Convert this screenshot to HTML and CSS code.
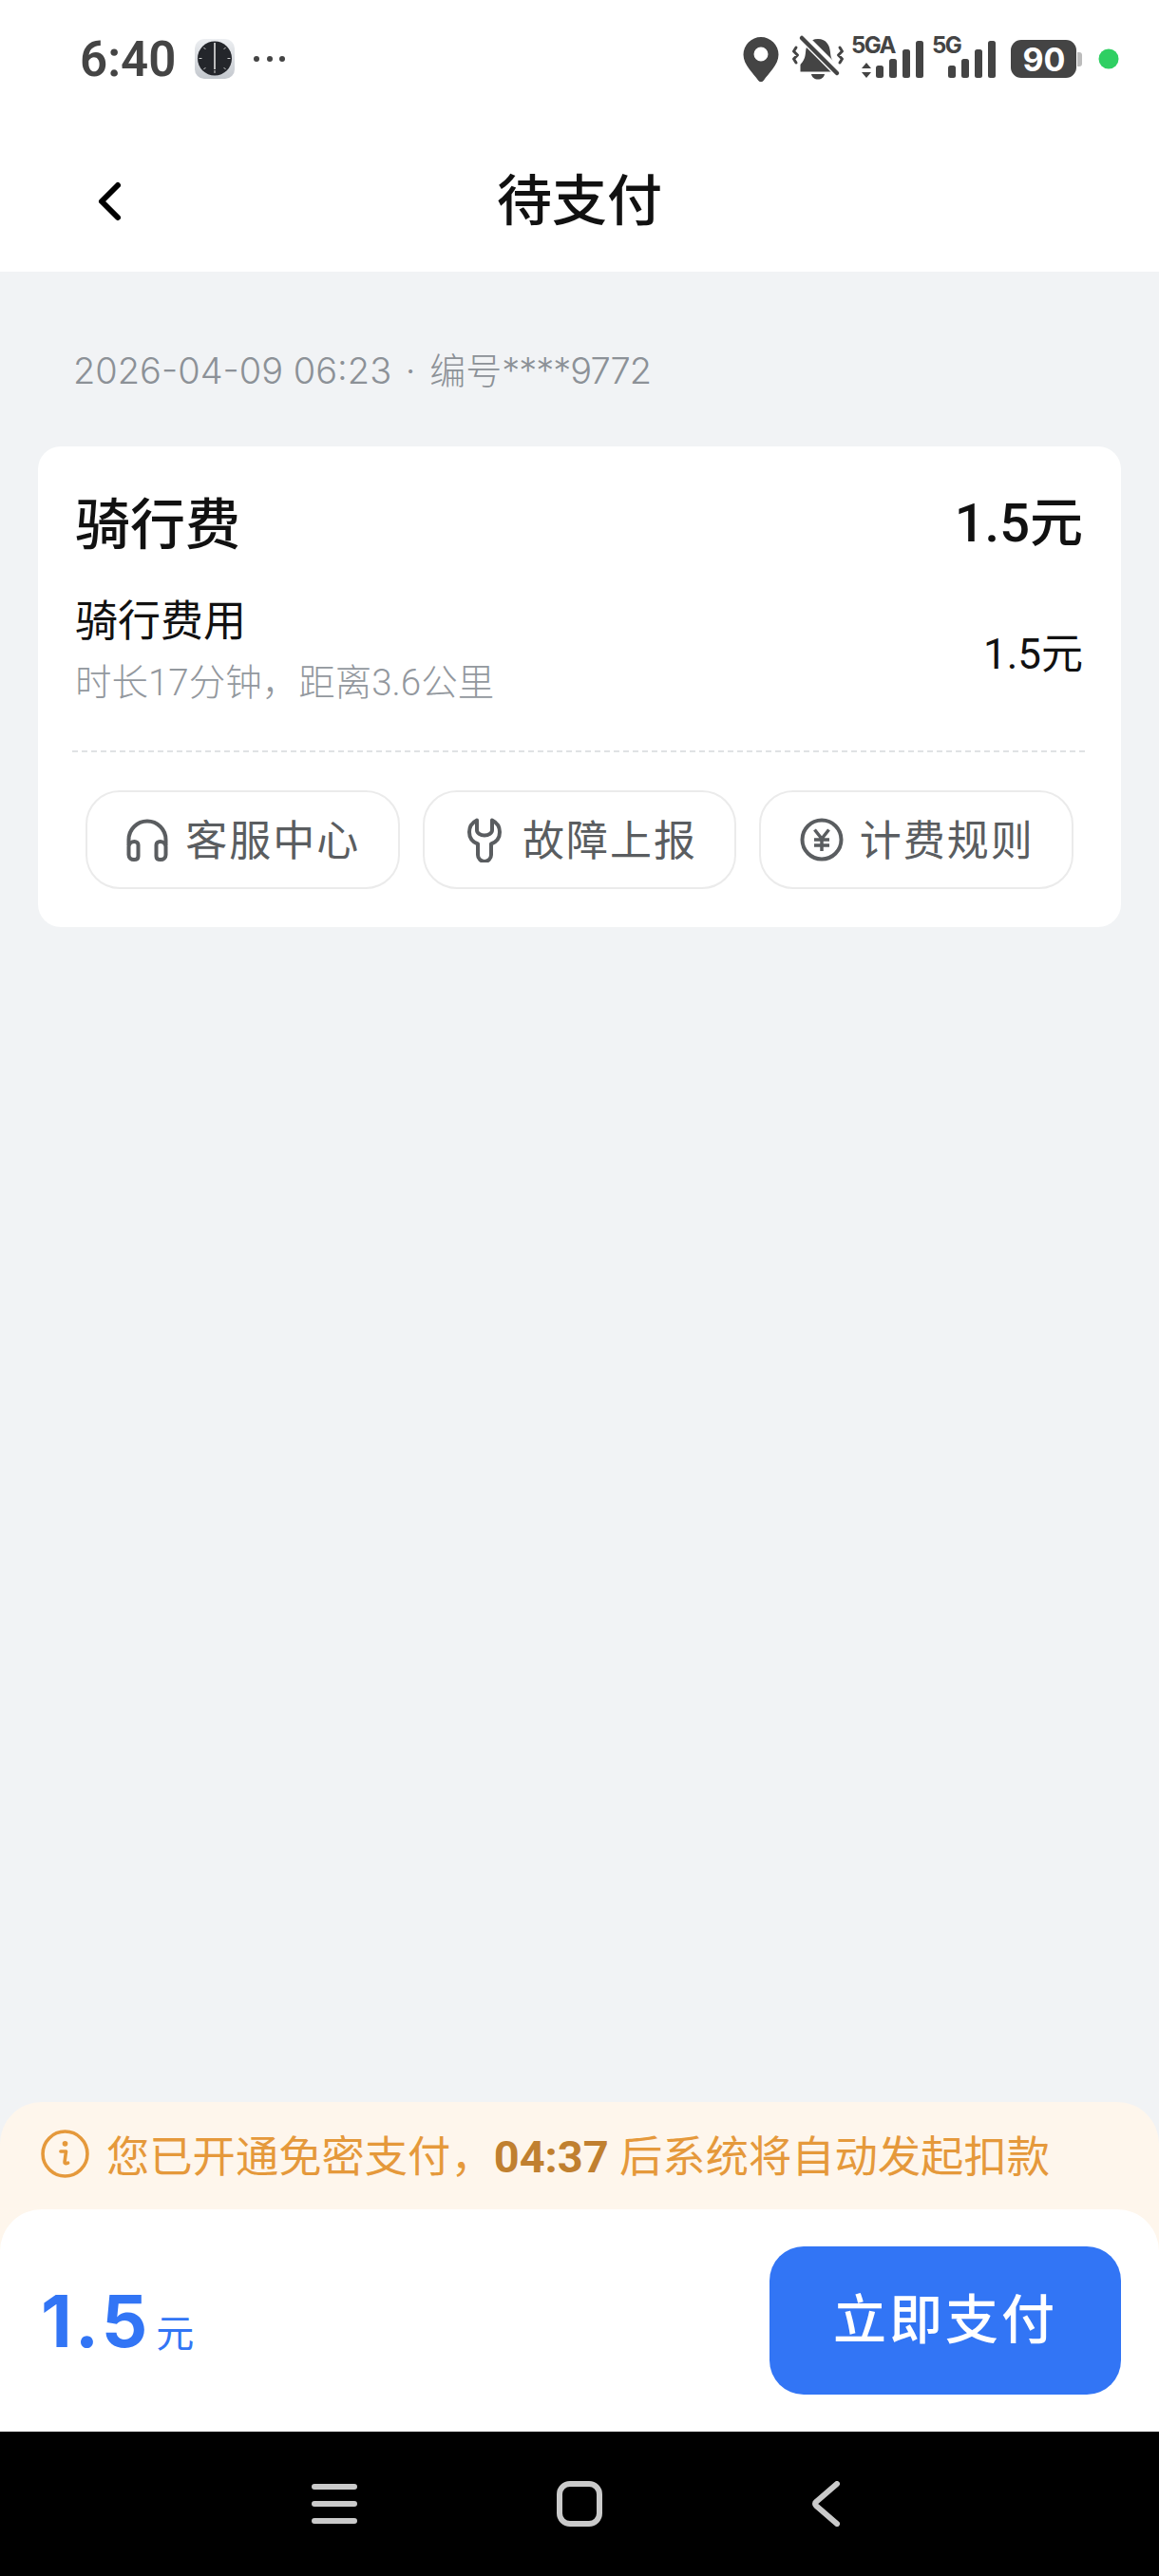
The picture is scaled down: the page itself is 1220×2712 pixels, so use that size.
FILE: index.html
```html
<!DOCTYPE html>
<html lang="zh-CN">

<head>
    <meta charset="UTF-8">
    <meta name="viewport" content="width=device-width, initial-scale=1.0">
    <title>待支付</title>
    <link rel="stylesheet" href="styles.css">
</head>

<body>
    <div class="page">
        <div class="status-bar">
            <div class="status-left">
                <span class="status-time">6:40</span>
                <svg class="clock-app" viewBox="0 0 42 42" width="42" height="42">
                    <defs>
                        <linearGradient id="clockBg" x1="0" y1="0" x2="0" y2="1">
                            <stop offset="0" stop-color="#eceef1"/>
                            <stop offset="1" stop-color="#c4c8ce"/>
                        </linearGradient>
                    </defs>
                    <rect width="42" height="42" rx="10" fill="url(#clockBg)"/>
                    <circle cx="21" cy="20.500" r="18" fill="#24262b"/>
                    <path d="M21 33v3M4.500 20.500h3M34.500 20.500h3M9.400 8.900l2 2M30.600 30.100l2 2M32.600 8.900l-2 2M11.400 30.100l-2 2" stroke="#ccc" stroke-width="1"/>
                    <path d="M21 4v28" stroke="#eee" stroke-width="1.500"/>
                </svg>
                <svg class="status-more" viewBox="0 0 34 8" width="34" height="8">
                    <circle cx="3" cy="4" r="3" fill="#444"/>
                    <circle cx="17" cy="4" r="3" fill="#444"/>
                    <circle cx="30" cy="4" r="3" fill="#444"/>
                </svg>
            </div>
            <svg class="status-icons" viewBox="780 32 400 60" width="400" height="60">
                <path fill-rule="evenodd" fill="#444" d="M801 39a18.500 18.500 0 0 1 18.500 18.500c0 11-11 20-15.500 27a3.500 3.500 0 0 1-6 0c-4.500-7-15.500-16-15.500-27A18.500 18.500 0 0 1 801 39zm0 10.500a7.500 7.500 0 1 0 0 15 7.500 7.500 0 0 0 0-15z"/>

                <path fill="#444" d="M861 41c9 0 12.500 7 13 14 .4 6 2 9 5.500 13v7.500h-37V68c3.500-4 5.100-7 5.500-13 .5-7 4-14 13-14z"/>
                <path fill="#444" d="M854 78h14c-.5 3.500-3.500 5.500-7 5.500s-6.500-2-7-5.500z"/>
                <path d="M844 38l38 38" stroke="#fff" stroke-width="10"/>
                <path d="M844 40l37 37" stroke="#444" stroke-width="4.500" stroke-linecap="round"/>
                <path d="M838 50l-2.500 4 4 4-4 4 2.500 4M884 50l2.500 4-4 4 4 4-2.500 4" fill="none" stroke="#444" stroke-width="3" stroke-linecap="round" stroke-linejoin="round"/>

                <text class="net-label" x="896" y="56">5GA</text>
                <path fill="#444" d="M912 66l5 6h-10zM912 82l-5-6h10z"/>
                <rect x="922" y="69" width="8" height="13" rx="2.500" fill="#444"/>
                <rect x="936" y="62" width="8" height="20" rx="2.500" fill="#444"/>
                <rect x="950" y="52" width="8" height="30" rx="2.500" fill="#444"/>
                <rect x="964" y="43" width="8" height="39" rx="2.500" fill="#444"/>

                <text class="net-label" x="981" y="56">5G</text>
                <rect x="998" y="69" width="8" height="13" rx="2.500" fill="#444"/>
                <rect x="1012" y="62" width="8" height="20" rx="2.500" fill="#444"/>
                <rect x="1026" y="52" width="8" height="30" rx="2.500" fill="#444"/>
                <rect x="1040" y="43" width="8" height="39" rx="2.500" fill="#444"/>

                <rect x="1064" y="42" width="69" height="40" rx="11" fill="#444"/>
                <path d="M1134 55h2a3 3 0 0 1 3 3v9a3 3 0 0 1-3 3h-2z" fill="#bcbcbc"/>
                <text class="battery-label" x="1099" y="74.500" text-anchor="middle">90</text>
                <circle cx="1167" cy="62" r="10.500" fill="#2fcf62"/>
            </svg>
        </div>

        <header class="nav-bar">
            <svg class="nav-back" viewBox="0 0 32 48" width="32" height="48">
                <path d="M24 7L7 24l17 17" fill="none" stroke="#000" stroke-width="6" stroke-linecap="round" stroke-linejoin="round"/>
            </svg>
            <h1 class="nav-title">待支付</h1>
        </header>

        <main class="content">
            <p class="order-meta">2026-04-09 06:23 <span class="meta-dot">·</span> 编号<span class="meta-no">****9772</span></p>

            <section class="card">
                <div class="fee-head">
                    <span class="fee-title">骑行费</span>
                    <span class="fee-total">1.5元</span>
                </div>
                <div class="fee-row">
                    <div>
                        <div class="fee-name">骑行费用</div>
                        <div class="fee-desc">时长17分钟，距离3.6公里</div>
                    </div>
                    <span class="fee-price">1.5元</span>
                </div>
                <div class="divider"></div>
                <div class="actions">
                    <button class="action">
                        <svg viewBox="0 0 48 48" width="48" height="48">
                            <path d="M4.500 30V24a19.500 19.500 0 0 1 39 0v6" fill="none" stroke="#5a5d60" stroke-width="4"/>
                            <path d="M4.500 31a6 6 0 0 1 6-5c2.500 0 4 1.500 4 3.500v12c0 2.200-1.500 3.500-4.500 3.500s-5.500-2-5.500-5z" fill="none" stroke="#5a5d60" stroke-width="4" stroke-linejoin="round"/>
                            <path d="M43.500 31a6 6 0 0 0-6-5c-2.500 0-4 1.500-4 3.500v12c0 2.200 1.500 3.500 4.500 3.500s5.500-2 5.500-5z" fill="none" stroke="#5a5d60" stroke-width="4" stroke-linejoin="round"/>
                        </svg>
                        <span>客服中心</span>
                    </button>
                    <button class="action">
                        <svg viewBox="0 0 48 48" width="48" height="48">
                            <path d="M16 3.500C11 6 8 11 8 16c0 6 3.500 10.500 9 12.500V40a7 7 0 0 0 14 0V28.500c5.500-2 9-6.500 9-12.500 0-5-3-10-8-12.500V14a8 5.500 0 0 1-16 0z" fill="none" stroke="#5a5d60" stroke-width="4" stroke-linejoin="round"/>
                        </svg>
                        <span>故障上报</span>
                    </button>
                    <button class="action">
                        <svg viewBox="0 0 48 48" width="48" height="48">
                            <circle cx="24" cy="24" r="20.500" fill="none" stroke="#5a5d60" stroke-width="4"/>
                            <path d="M16.500 13.500L24 23l7.500-9.500M16 24h16M16 30h16M24 23v13" fill="none" stroke="#5a5d60" stroke-width="3.500"/>
                        </svg>
                        <span>计费规则</span>
                    </button>
                </div>
            </section>
        </main>

        <div class="tip-wrap">
            <div class="tip">
                <svg viewBox="0 0 50 50" width="51" height="51">
                    <circle cx="25" cy="25" r="23" fill="none" stroke="#e5993b" stroke-width="3.500"/>
                    <circle cx="25" cy="14.500" r="2.800" fill="#e5993b"/>
                    <path d="M20.500 22.500h5.500l-1.500 11c-.2 1.500 1 2 3.500 1" fill="none" stroke="#e5993b" stroke-width="3.500" stroke-linecap="round" stroke-linejoin="round"/>
                </svg>
                <span class="tip-text">您已开通免密支付，<b class="tip-time">04:37</b> 后系统将自动发起扣款</span>
            </div>
            <div class="pay-bar">
                <div class="pay-amount"><span class="pay-num">1.5</span><span class="pay-unit">元</span></div>
                <button class="pay-btn"><span>立即支付</span></button>
            </div>
        </div>

        <div class="sys-nav">
            <svg viewBox="0 0 48 48" width="48" height="48">
                <path d="M3 6h42M3 24h42M3 42h42" stroke="#cacaca" stroke-width="6" stroke-linecap="round"/>
            </svg>
            <svg viewBox="0 0 48 48" width="48" height="48">
                <rect x="3" y="3" width="42" height="42" rx="11" fill="none" stroke="#cacaca" stroke-width="6"/>
            </svg>
            <svg viewBox="0 0 48 48" width="48" height="48">
                <path d="M37 3L15 22a2.500 2.500 0 0 0 0 4l22 19" fill="none" stroke="#cacaca" stroke-width="6" stroke-linecap="round" stroke-linejoin="round"/>
            </svg>
        </div>
    </div>
</body>

</html>
```

FILE: styles.css
```css
* {
    box-sizing: border-box;
}

html,
body {
    margin: 0;
    padding: 0;
}

body {
    font-family: Roboto, "Noto Sans CJK SC", sans-serif;
    background-color: #f1f3f5;
}

.page {
    width: 1220px;
    height: 2712px;
    display: flex;
    flex-direction: column;
    overflow: hidden;
}

/* status bar */
.status-bar {
    height: 124px;
    flex: none;
    background-color: #fff;
    display: flex;
    align-items: center;
    justify-content: space-between;
    padding: 0 40px 0 84px;
}

.status-left {
    display: flex;
    align-items: center;
}

.status-time {
    font-size: 51px;
    font-weight: 600;
    color: #444;
}

.clock-app {
    margin-left: 20px;
}

.status-more {
    margin-left: 20px;
}

.net-label {
    font-family: Inter, sans-serif;
    font-size: 24px;
    font-weight: 700;
    fill: #444;
    letter-spacing: -1.5px;
}

.battery-label {
    font-family: Inter, sans-serif;
    font-size: 34px;
    font-weight: 700;
    fill: #fff;
}

/* title bar */
.nav-bar {
    height: 162px;
    flex: none;
    background-color: #fff;
    display: grid;
    grid-template-columns: 1fr auto 1fr;
    align-items: center;
    padding: 14px 100px 0;
}

.nav-title {
    margin: 0;
    font-size: 58px;
    line-height: 70px;
    font-weight: 500;
    color: #111;
}

.content {
    flex: 1;
    padding: 79px 40px 0;
}

.order-meta {
    margin: 0 0 55px 37px;
    font-family: Inter, "Noto Sans CJK SC", sans-serif;
    font-size: 38px;
    line-height: 50px;
    font-weight: 300;
    color: #8c9197;
    white-space: nowrap;
}

.meta-dot {
    margin: 0 4px;
}

.meta-no {
    letter-spacing: -1px;
}

.card {
    background-color: #fff;
    border-radius: 24px;
    height: 506px;
    padding: 46px 40px 0;
}

.fee-head {
    display: flex;
    justify-content: space-between;
    align-items: center;
    height: 64px;
    margin-left: -1px;
}

.fee-title {
    font-size: 58px;
    font-weight: 500;
    color: #111;
}

.fee-total {
    font-size: 56px;
    font-weight: 500;
    color: #111;
    margin-top: -6px;
}

.fee-row {
    display: flex;
    justify-content: space-between;
    align-items: center;
    margin: 47px 0 0 -1px;
}

.fee-name {
    font-size: 45px;
    line-height: 56px;
    color: #111;
}

.fee-desc {
    margin-top: 8px;
    font-size: 38.500px;
    line-height: 56px;
    font-weight: 300;
    color: #93989e;
}

.fee-price {
    font-size: 44px;
    color: #111;
    margin-bottom: 4px;
}

.divider {
    margin: 43px -2px 0 -4px;
    border-top: 2px dashed #e0e2e4;
}

.actions {
    display: flex;
    gap: 24px;
    margin: 40px 10px 0;
}

.action {
    flex: 1;
    height: 104px;
    background-color: #fff;
    border: 2px solid #ebebeb;
    border-radius: 36px;
    display: flex;
    align-items: center;
    justify-content: center;
    gap: 16px;
    padding: 0;
    font-family: inherit;
    font-size: 44px;
    letter-spacing: 2px;
    color: #5a5d60;
}

.action span {
    padding-bottom: 5px;
}

/* bottom */
.tip-wrap {
    flex: none;
    background: linear-gradient(#fef6ec 0, #fef6ec 75%, #fbf1e4 100%);
    border-radius: 44px 44px 0 0;
}

.tip {
    height: 113px;
    display: flex;
    align-items: center;
    padding: 0 0 5px 43px;
    gap: 18px;
}

.tip-text {
    font-size: 45.300px;
    color: #e5993b;
    white-space: nowrap;
}

.tip-time {
    font-family: Roboto, sans-serif;
    font-weight: 700;
    font-size: 47px;
    color: #c08030;
}

.pay-bar {
    height: 234px;
    background-color: #fff;
    border-radius: 44px 44px 0 0;
    display: flex;
    align-items: center;
    justify-content: space-between;
    padding: 0 40px 0 43px;
}

.pay-amount {
    display: flex;
    align-items: baseline;
    gap: 6px;
    color: #3275f5;
}

.pay-num {
    font-family: Inter, sans-serif;
    font-size: 76px;
    font-weight: 700;
    letter-spacing: 3px;
}

.pay-unit {
    font-size: 40px;
}

.pay-btn {
    width: 370px;
    height: 156px;
    border: none;
    border-radius: 36px;
    background-color: #3275f5;
    color: #fff;
    font-family: inherit;
    font-size: 56px;
    font-weight: 500;
    letter-spacing: 3px;
}

.pay-btn span {
    display: block;
    padding-bottom: 12px;
}

.sys-nav {
    height: 152px;
    flex: none;
    background-color: #000;
    display: flex;
    align-items: center;
    justify-content: center;
    gap: 210px;
}
```
